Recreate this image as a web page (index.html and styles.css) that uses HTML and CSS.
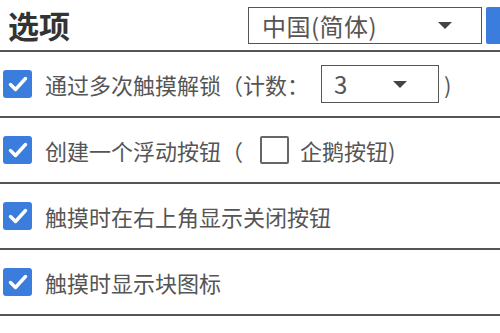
FILE: index.html
```html
<!DOCTYPE html>
<html lang="zh-CN">
<head>
<meta charset="utf-8">
<link rel="stylesheet" href="styles.css">
</head>
<body>
<div class="page">
  <header class="header">
    <h1 class="title">选项</h1>
    <div class="select lang">
      <span class="select-text">中国(简体)</span>
      <span class="arrow"></span>
    </div>
    <div class="blue-btn"></div>
  </header>
  <div class="row">
    <span class="cb checked"><svg viewBox="0 0 28 28" width="28" height="28"><path d="M6.5 14.5 L11.5 19.5 L21.5 8.5" fill="none" stroke="#fff" stroke-width="3.4" stroke-linecap="round" stroke-linejoin="round"/></svg></span>
    <span class="label">通过多次触摸解锁（计数：</span>
    <div class="select count">
      <span class="select-text">3</span>
      <span class="arrow"></span>
    </div>
    <span class="label close">)</span>
  </div>
  <div class="row">
    <span class="cb checked"><svg viewBox="0 0 28 28" width="28" height="28"><path d="M6.5 14.5 L11.5 19.5 L21.5 8.5" fill="none" stroke="#fff" stroke-width="3.4" stroke-linecap="round" stroke-linejoin="round"/></svg></span>
    <span class="label">创建一个浮动按钮（</span>
    <span class="cb empty"></span>
    <span class="label">企鹅按钮)</span>
  </div>
  <div class="row">
    <span class="cb checked"><svg viewBox="0 0 28 28" width="28" height="28"><path d="M6.5 14.5 L11.5 19.5 L21.5 8.5" fill="none" stroke="#fff" stroke-width="3.4" stroke-linecap="round" stroke-linejoin="round"/></svg></span>
    <span class="label">触摸时在右上角显示关闭按钮</span>
  </div>
  <div class="row">
    <span class="cb checked"><svg viewBox="0 0 28 28" width="28" height="28"><path d="M6.5 14.5 L11.5 19.5 L21.5 8.5" fill="none" stroke="#fff" stroke-width="3.4" stroke-linecap="round" stroke-linejoin="round"/></svg></span>
    <span class="label">触摸时显示块图标</span>
  </div>
</div>
</body>
</html>
```

FILE: styles.css
```css
* { box-sizing: border-box; }
html, body { margin: 0; padding: 0; background: #fff; }
body {
  font-family: "Noto Sans CJK SC", "Noto Sans", sans-serif;
  color: #555;
  width: 500px;
  height: 333px;
  overflow: hidden;
}
.page { width: 500px; }
.header {
  display: flex;
  align-items: flex-start;
  height: 52px;
  border-bottom: 2px solid #555;
}
.title {
  flex: none;
  margin: 0;
  padding: 5px 0 0 8px;
  font-size: 31px;
  line-height: 40px;
  font-weight: bold;
  color: #333;
  width: 248px;
}
.select {
  flex: none;
  display: flex;
  align-items: center;
  border: 1.5px solid #555;
  background: #fff;
}
.select.lang {
  margin-top: 7px;
  width: 234px;
  height: 37px;
  padding-left: 13px;
}
.select-text {
  font-size: 24px;
  line-height: 30px;
  font-weight: 400;
  color: #555;
}
.lang .select-text { letter-spacing: 0.5px; }
.arrow {
  width: 0; height: 0;
  border-left: 7px solid transparent;
  border-right: 7px solid transparent;
  border-top: 7px solid #444;
  margin-left: auto;
}
.lang .arrow { margin-right: 29px; }
.blue-btn {
  flex: none;
  margin-top: 7px;
  margin-left: 4px;
  width: 20px;
  height: 37px;
  background: #3b7ddd;
  border-radius: 2px 0 0 2px;
}
.row {
  display: flex;
  align-items: center;
  height: 66px;
  border-bottom: 2px solid #555;
  padding-left: 3px;
}
.cb {
  width: 29px;
  height: 28px;
  flex: none;
  border-radius: 3px;
  display: flex;
  align-items: center;
  justify-content: center;
}
.cb.checked {
  background: #3b7ddd;
  margin-right: 13px;
}
.cb.empty {
  border: 2.5px solid #666;
  border-radius: 2px;
  margin: 0 11px 0 17px;
}
.label {
  font-size: 22px;
  line-height: 30px;
  font-weight: 400;
  white-space: nowrap;
  color: #555;
}
.select.count {
  width: 118px;
  height: 38px;
  margin-left: 12px;
  padding-left: 12px;
}
.count .arrow { margin-right: 31px; }
.label.close { margin-left: 5px; }
```
